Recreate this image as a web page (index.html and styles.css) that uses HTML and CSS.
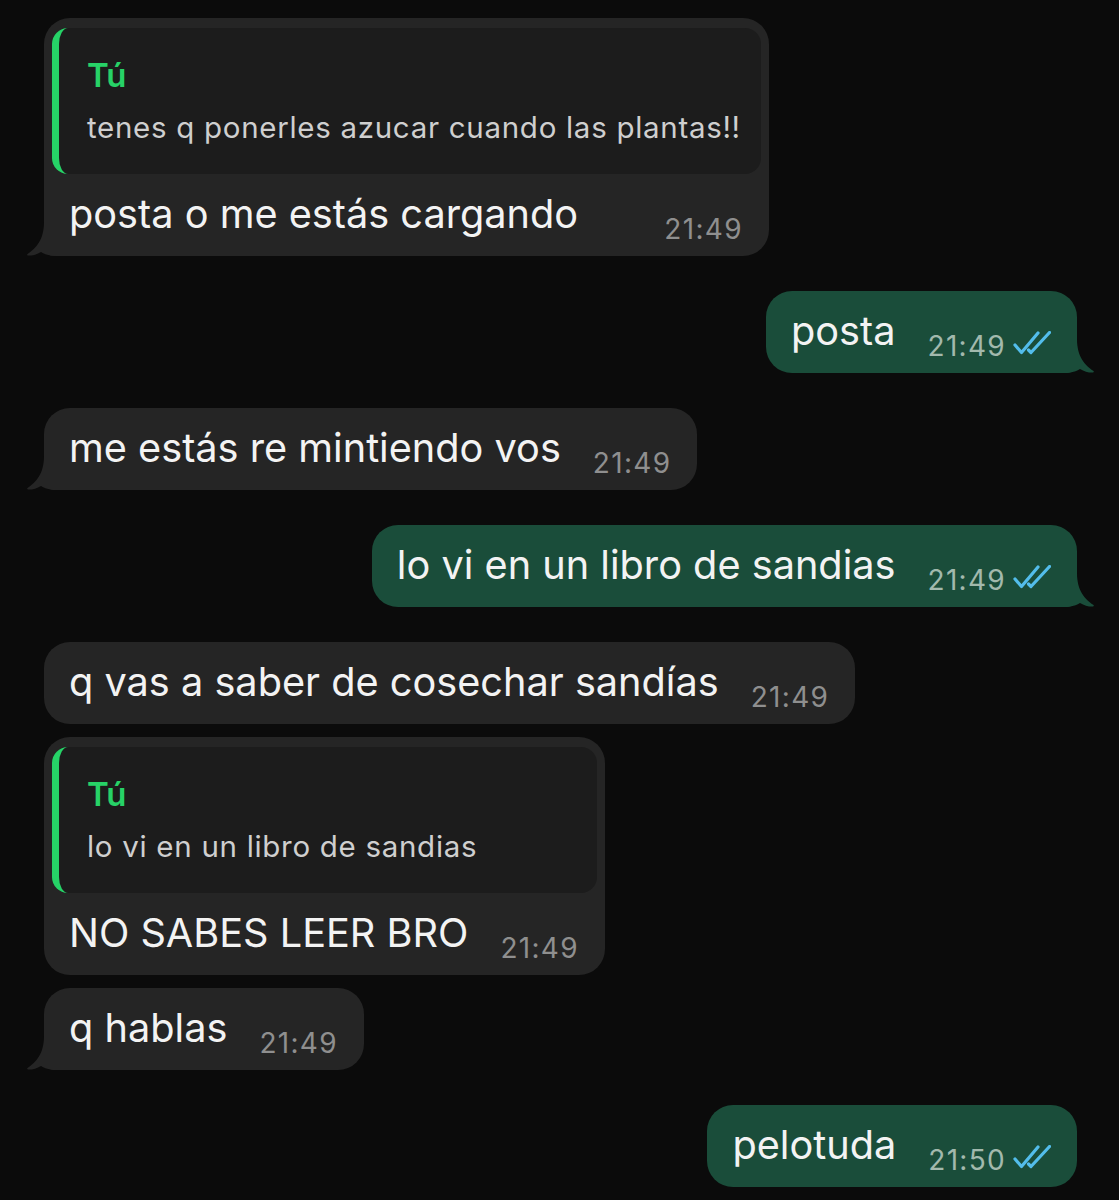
FILE: index.html
```html
<!DOCTYPE html>
<html lang="es">
<head>
<meta charset="utf-8">
<title>Chat</title>
<link rel="stylesheet" href="styles.css">
</head>
<body>
<main class="chat">

  <div class="msg in first tail">
    <div class="quote">
      <div class="q-name">Tú</div>
      <div class="q-text">tenes q ponerles azucar cuando las plantas!!</div>
    </div>
    <div class="row after-quote">
      <span class="txt">posta o me estás cargando</span>
      <span class="time">21:49</span>
    </div>
    <svg class="tail-l" viewBox="0 0 40 36" aria-hidden="true"><path d="M18 0 L40 0 L40 36 L30 36 C24 36 18 34 15 32 C11 34.5 7 35.6 3 35.6 C1.2 35.6 0.6 34.6 1.8 33.8 C10 28 18 20 18 2 Z"/></svg>
  </div>

  <div class="msg out tail">
    <div class="row">
      <span class="txt">posta</span>
      <span class="time">21:49</span>
      <svg class="check" viewBox="0 0 38 24" aria-hidden="true"><path d="M2 14 L8.5 21.5 L25 2"/><path d="M15.5 19 L18 21.5 L36.5 1.5"/></svg>
    </div>
    <svg class="tail-r" viewBox="0 0 40 36" aria-hidden="true"><path d="M22 0 L0 0 L0 36 L10 36 C16 36 22 34 25 32 C29 34.5 33 35.6 37 35.6 C38.8 35.6 39.4 34.6 38.2 33.8 C30 28 22 20 22 2 Z"/></svg>
  </div>

  <div class="msg in tail">
    <div class="row">
      <span class="txt">me estás re mintiendo vos</span>
      <span class="time">21:49</span>
    </div>
    <svg class="tail-l" viewBox="0 0 40 36" aria-hidden="true"><path d="M18 0 L40 0 L40 36 L30 36 C24 36 18 34 15 32 C11 34.5 7 35.6 3 35.6 C1.2 35.6 0.6 34.6 1.8 33.8 C10 28 18 20 18 2 Z"/></svg>
  </div>

  <div class="msg out tail">
    <div class="row">
      <span class="txt">lo vi en un libro de sandias</span>
      <span class="time">21:49</span>
      <svg class="check" viewBox="0 0 38 24" aria-hidden="true"><path d="M2 14 L8.5 21.5 L25 2"/><path d="M15.5 19 L18 21.5 L36.5 1.5"/></svg>
    </div>
    <svg class="tail-r" viewBox="0 0 40 36" aria-hidden="true"><path d="M22 0 L0 0 L0 36 L10 36 C16 36 22 34 25 32 C29 34.5 33 35.6 37 35.6 C38.8 35.6 39.4 34.6 38.2 33.8 C30 28 22 20 22 2 Z"/></svg>
  </div>

  <div class="msg in">
    <div class="row">
      <span class="txt">q vas a saber de cosechar sandías</span>
      <span class="time">21:49</span>
    </div>
  </div>

  <div class="msg in same">
    <div class="quote">
      <div class="q-name">Tú</div>
      <div class="q-text">lo vi en un libro de sandias</div>
    </div>
    <div class="row after-quote">
      <span class="txt">NO SABES LEER BRO</span>
      <span class="time">21:49</span>
    </div>
  </div>

  <div class="msg in same tail">
    <div class="row">
      <span class="txt">q hablas</span>
      <span class="time">21:49</span>
    </div>
    <svg class="tail-l" viewBox="0 0 40 36" aria-hidden="true"><path d="M18 0 L40 0 L40 36 L30 36 C24 36 18 34 15 32 C11 34.5 7 35.6 3 35.6 C1.2 35.6 0.6 34.6 1.8 33.8 C10 28 18 20 18 2 Z"/></svg>
  </div>

  <div class="msg out">
    <div class="row">
      <span class="txt">pelotuda</span>
      <span class="time">21:50</span>
      <svg class="check" viewBox="0 0 38 24" aria-hidden="true"><path d="M2 14 L8.5 21.5 L25 2"/><path d="M15.5 19 L18 21.5 L36.5 1.5"/></svg>
    </div>
  </div>

</main>
</body>
</html>
```

FILE: styles.css
```css
html, body {
  margin: 0;
  padding: 0;
  background: #0b0b0b;
}

body {
  font-family: Inter, "Noto Sans", "Liberation Sans", sans-serif;
  color: #f3f3f3;
  height: 1200px;
  overflow: hidden;
}

.chat {
  display: flex;
  flex-direction: column;
  padding-top: 18px;
}

.msg {
  position: relative;
  display: flex;
  flex-direction: column;
  border-radius: 26px;
  padding-bottom: 14px;
  margin-top: 35px;
}

.msg.first { margin-top: 0; }
.msg.same { margin-top: 13px; }

.msg.in {
  align-self: flex-start;
  margin-left: 44px;
  background: #252525;
}

.msg.out {
  align-self: flex-end;
  margin-right: 42px;
  background: #1a4d3a;
}

.msg.in.tail { border-bottom-left-radius: 10px; }
.msg.out.tail { border-bottom-right-radius: 10px; }

.row {
  display: flex;
  align-items: flex-end;
  padding: 16px 26px 0 25px;
}

.row.after-quote { padding-top: 16px; }

.txt {
  font-size: 39.7px;
  line-height: 48px;
  padding-bottom: 4px;
  margin-right: 32px;
  white-space: nowrap;
}

.time {
  font-size: 28px;
  line-height: 28px;
  margin-left: auto;
  margin-bottom: -1px;
  white-space: nowrap;
  letter-spacing: 1.3px;
}

.in .time { color: #8f8f8f; }
.out .time { color: #a2b9ad; }

.check {
  width: 38px;
  height: 24px;
  margin-left: 7px;
  margin-bottom: 4px;
  flex: none;
}

.check path {
  fill: none;
  stroke: #53bdeb;
  stroke-width: 3.2;
  stroke-linecap: round;
  stroke-linejoin: round;
}

.quote {
  margin: 10px 8px 0 8px;
  background: #1c1c1c;
  border-radius: 16px;
  border-left: 7px solid #26d367;
  padding: 28px 20px 29px 28px;
}

.q-name {
  font-size: 33px;
  line-height: 38px;
  font-weight: 600;
  color: #27d267;
}

.q-text {
  margin-top: 15px;
  font-size: 29.5px;
  line-height: 36px;
  letter-spacing: 0.7px;
  color: #cfcfcf;
  white-space: nowrap;
}

.tail-l, .tail-r {
  position: absolute;
  bottom: 0;
  width: 40px;
  height: 36px;
}

.tail-l { left: -18px; fill: #252525; }
.tail-r { right: -18px; fill: #1a4d3a; }
```
